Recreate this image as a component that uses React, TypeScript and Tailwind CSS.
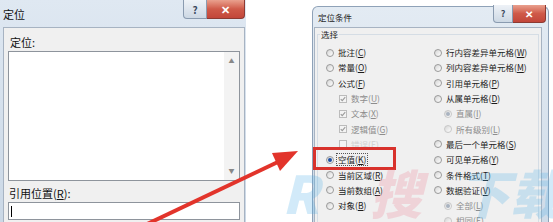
import React from "react";

const cjk = { fontFamily: '"Noto Sans CJK SC", "Noto Sans", sans-serif' };

function Radio({ checked, disabled }: { checked?: boolean; disabled?: boolean }) {
  return (
    <span
      className={
        "flex h-[8px] w-[8px] shrink-0 items-center justify-center rounded-full border bg-gradient-to-br from-[#d6d6d6] to-[#ffffff] " +
        (disabled ? "border-[#c8c8c8]" : "border-[#9a9a9a]")
      }
    >
      {checked && (
        <span className={"h-[4px] w-[4px] rounded-full " + (disabled ? "bg-[#a9b3c0]" : "bg-[#1d4fa3]")} />
      )}
    </span>
  );
}

function Check({ faint }: { faint?: boolean }) {
  return (
    <span className="flex h-[8px] w-[8px] shrink-0 items-center justify-center border border-[#bcbcbc] bg-[#f4f4f4]">
      {!faint && (
        <svg width="6" height="6" viewBox="0 0 8 8">
          <path d="M1 4.2 L3 6.2 L7 1.5" fill="none" stroke="#9a9a9a" strokeWidth="1.4" />
        </svg>
      )}
    </span>
  );
}

type Item = {
  t: string;
  u: string;
  kind: "radio" | "check" | "subradio";
  disabled?: boolean;
  checked?: boolean;
  faint?: boolean;
  focus?: boolean;
};

const left: Item[] = [
  { t: "批注", u: "C", kind: "radio" },
  { t: "常量", u: "O", kind: "radio" },
  { t: "公式", u: "F", kind: "radio" },
  { t: "数字", u: "U", kind: "check", disabled: true },
  { t: "文本", u: "X", kind: "check", disabled: true },
  { t: "逻辑值", u: "G", kind: "check", disabled: true },
  { t: "错误", u: "E", kind: "check", disabled: true, faint: true },
  { t: "空值", u: "K", kind: "radio", checked: true, focus: true },
  { t: "当前区域", u: "R", kind: "radio" },
  { t: "当前数组", u: "A", kind: "radio" },
  { t: "对象", u: "B", kind: "radio" },
];

const right: Item[] = [
  { t: "行内容差异单元格", u: "W", kind: "radio" },
  { t: "列内容差异单元格", u: "M", kind: "radio" },
  { t: "引用单元格", u: "P", kind: "radio" },
  { t: "从属单元格", u: "D", kind: "radio" },
  { t: "直属", u: "I", kind: "subradio", disabled: true, checked: true },
  { t: "所有级别", u: "L", kind: "subradio", disabled: true },
  { t: "最后一个单元格", u: "S", kind: "radio" },
  { t: "可见单元格", u: "Y", kind: "radio" },
  { t: "条件格式", u: "T", kind: "radio" },
  { t: "数据验证", u: "V", kind: "radio" },
  { t: "全部", u: "L", kind: "subradio", disabled: true, checked: true },
  { t: "相同", u: "E", kind: "subradio", disabled: true },
];

function Row({ it }: { it: Item }) {
  const indent =
    it.kind === "check" ? "pl-[13px]" : it.kind === "subradio" ? "pl-[10px]" : "pl-0";
  const color = it.faint ? "text-[#cfcfcf]" : it.disabled ? "text-[#8d8d8d]" : "text-[#1c1c1c]";
  return (
    <div className={"flex h-[15.3px] items-center gap-[3px] " + indent}>
      {it.kind === "check" ? (
        <Check faint={it.faint} />
      ) : (
        <Radio checked={it.checked} disabled={it.disabled} />
      )}
      <span
        className={
          "whitespace-nowrap px-[1px] leading-[11px] " +
          color +
          (it.focus ? " outline outline-1 outline-dotted outline-[#555]" : "")
        }
      >
        {it.t}(<span className="underline">{it.u}</span>)
      </span>
    </div>
  );
}

export default function App() {
  return (
    <div className="relative flex h-[222px] w-[553px] overflow-hidden bg-white" style={cjk}>
      {/* left dialog */}
      <div className="flex h-full w-[246px] shrink-0 flex-col bg-gradient-to-b from-[#dfe8f2] to-[#cbd8e6] text-[11px]">
        <div className="flex h-[27px] shrink-0 items-start justify-between">
          <span className="pl-[3px] pt-[6px] text-[11px] text-[#111]">定位</span>
          <div className="pr-[1px]">
            <div className="flex h-[19px] items-stretch">
              <div className="flex w-[24px] items-center justify-center rounded-bl-[4px] border border-t-0 border-[#8a9bb0] bg-gradient-to-b from-[#eef2f7] to-[#cdd8e4] text-[10px] font-bold text-[#3c4b5e]">
                ?
              </div>
              <div className="flex w-[38px] items-center justify-center rounded-br-[4px] border border-l-0 border-t-0 border-[#8c3a32] bg-gradient-to-b from-[#e9a08e] via-[#cf5a49] to-[#c2463a] text-[11px] font-bold text-white">
                ✕
              </div>
            </div>
          </div>
        </div>
        <div className="ml-[3px] mr-[1px] flex flex-1 flex-col border border-b-0 border-[#a7b3c2] bg-[#f0f0f0] px-[4px]">
          <div className="pl-[2px] pt-[6px] leading-[16px] text-[#111]">定位:</div>
          <div className="mt-[1px] flex h-[130px] border border-[#8e949c] bg-white">
            <div className="flex-1" />
            <div className="flex w-[15px] flex-col items-center justify-between bg-[#f3f3f3] py-[6px]">
              <span className="text-[6px] leading-[6px] text-[#888]">▲</span>
              <span className="text-[6px] leading-[6px] text-[#888]">▼</span>
            </div>
          </div>
          <div className="pl-[1px] pt-[4px] leading-[16px] text-[#111]">
            引用位置(<span className="underline">R</span>):
          </div>
          <div className="mt-[1px] flex h-[18px] items-center border border-[#8e949c] bg-white pl-[2px]">
            <span className="h-[11px] w-[1px] bg-black" />
          </div>
        </div>
      </div>

      {/* right dialog */}
      <div className="ml-[66px] mt-[6px] flex w-[237px] shrink-0 flex-col rounded-t-[6px] border border-b-0 border-[#8fa2b8] bg-gradient-to-b from-[#e3ebf3] to-[#cfdbe8] text-[8.5px]">
        <div className="flex h-[20px] shrink-0 items-start justify-between">
          <span className="pl-[5px] pt-[4px] text-[#222]">定位条件</span>
          <div className="-mt-[2px] pr-[2px]">
            <div className="flex h-[18px] items-stretch">
              <div className="flex w-[20px] items-center justify-center rounded-bl-[4px] border border-t-0 border-[#8a9bb0] bg-gradient-to-b from-[#eef2f7] to-[#cdd8e4] text-[9px] font-bold text-[#3c4b5e]">
                ?
              </div>
              <div className="flex w-[33px] items-center justify-center rounded-br-[4px] border border-l-0 border-t-0 border-[#8c3a32] bg-gradient-to-b from-[#e9a08e] via-[#cf5a49] to-[#c2463a] text-[10px] font-bold text-white">
                ✕
              </div>
            </div>
          </div>
        </div>
        <div className="ml-[1px] mr-[6px] flex flex-1 flex-col border border-b-0 border-[#a7b3c2] bg-[#f0f0f0] px-[2px] pt-[6px]">
          <div className="relative flex-1 border border-b-0 border-[#d5dde5] pt-[10px]">
            <span className="absolute -top-[7px] left-[2px] bg-[#f0f0f0] px-[1px] leading-[13px] text-[#222]">
              选择
            </span>
            <div className="grid grid-cols-[108px_1fr] pl-[8px]">
              <div className="flex flex-col">
                {left.map((it, i) => (
                  <Row key={i} it={it} />
                ))}
              </div>
              <div className="flex flex-col">
                {right.map((it, i) => (
                  <Row key={i} it={it} />
                ))}
              </div>
            </div>
          </div>
        </div>
      </div>

      {/* red highlight over 空值 */}
      <div className="pointer-events-none absolute left-[313px] top-[147px] h-[23px] w-[83px] border-[3px] border-[#d8322c]" />

      {/* watermark */}
      <div className="pointer-events-none absolute left-[282px] top-[160px] flex items-end whitespace-nowrap text-[52px] font-black italic leading-[64px] opacity-25">
        <span className="w-[88px] text-[#4fb0e8]">R</span>
        <span className="w-[88px] text-[#ee7f92]">搜</span>
        <span className="text-[#4fb0e8]">下载</span>
      </div>

      {/* arrow */}
      <svg className="pointer-events-none absolute left-0 top-0" width="553" height="222">
        <line x1="143" y1="226" x2="280" y2="161" stroke="#e2342b" strokeWidth="4" />
        <polygon points="298,151 280,171 272,153" fill="#e2342b" />
      </svg>
    </div>
  );
}
